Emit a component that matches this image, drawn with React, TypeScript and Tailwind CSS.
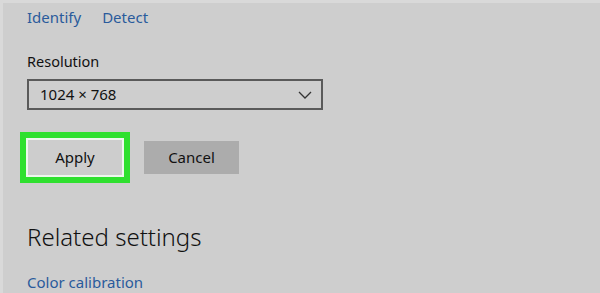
export default function App() {
  return (
    <div
      className="w-[600px] h-[293px] overflow-hidden bg-[#cecece] border-l-[3px] border-t-[3px] border-[#d9d9d9] text-[#111]"
      style={{ fontFamily: '"Noto Sans", "Open Sans", sans-serif' }}
    >
      <div className="pl-[24px] pt-[3px]">
        {/* top links */}
        <div className="flex gap-[21px] text-[15px] leading-[22px] text-[#2a5b9c]">
          <span>Identify</span>
          <span>Detect</span>
        </div>

        <div className="mt-[23px] text-[14.5px] leading-[20px]">Resolution</div>

        {/* dropdown */}
        <div className="mt-[8px] w-[296px] h-[31px] border-2 border-[#5a5a5a] flex items-center justify-between pl-[11px] pr-[9px]">
          <span className="text-[15px]">1024 × 768</span>
          <svg width="14" height="8" viewBox="0 0 14 8" fill="none" stroke="#333" strokeWidth="1.3">
            <path d="M1 1l6 6 6-6" />
          </svg>
        </div>

        {/* buttons */}
        <div className="mt-[22px] flex items-center gap-[14px] -ml-[7px]">
          <div className="border-[6px] border-[#2fe02f]">
            <div className="border-2 border-[#eef7ee] w-[98px] h-[39px] flex items-center justify-center text-[15px] bg-[#cdcdcd]">
              Apply
            </div>
          </div>
          <div className="w-[95px] h-[33px] bg-[#acacac] flex items-center justify-center text-[15px]">
            Cancel
          </div>
        </div>

        <div className="mt-[39px] text-[24px] leading-[30px] font-light">Related settings</div>

        <div className="mt-[20px] text-[15px] leading-[20px] text-[#2a5b9c]">Color calibration</div>
      </div>
    </div>
  );
}
